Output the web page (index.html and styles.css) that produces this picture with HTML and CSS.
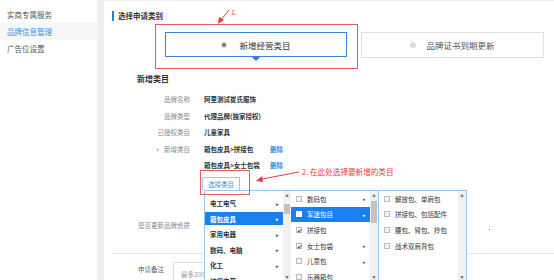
FILE: index.html
```html
<!DOCTYPE html>
<html>
	<head>
		<meta charset="UTF-8">
		<title>品牌信息管理</title>
		<link rel="stylesheet" href="styles.css">
	</head>
	<body>
		<div class="page">
			<aside class="sidebar">
				<div class="nav-item">实商专属服务</div>
				<div class="nav-item active">品牌信息管理</div>
				<div class="nav-item">广告位设置</div>
			</aside>
			<div class="gutter"></div>
			<main class="main">
				<h3 class="section-title">选择申请类别</h3>
				<div class="type-row">
					<div class="type-box on"><span class="radio"></span>新增经营类目</div>
					<div class="type-box"><span class="radio"></span>品牌证书到期更新</div>
				</div>
				<h4 class="sub-title">新增类目</h4>
				<div class="form">
					<div class="row"><label>品牌名称</label><span class="val">阿里测试崔氏服饰</span></div>
					<div class="row"><label>品牌类型</label><span class="val">代理品牌(独家授权)</span></div>
					<div class="row"><label>已授权类目</label><span class="val">儿童家具</span></div>
					<div class="row"><label><i>•</i>新增类目</label><span class="val">箱包皮具&gt;拼接包</span><a class="del">删除</a></div>
					<div class="row"><label></label><span class="val">箱包皮具&gt;女士包袋</span><a class="del">删除</a></div>
					<div class="row btn-row"><label></label><span class="pick-btn">选择类目</span></div>
					<div class="row tall"><label>是否更新品牌资质</label></div>
				</div>
				<div class="remark">
					<label>申请备注</label>
					<div class="input">最多200字</div>
				</div>
			</main>
		</div>

		<!-- 类目下拉 -->
		<div class="dropdown">
			<div class="col col1">
				<ul class="list">
					<li>电工电气<span class="arr">▸</span></li>
					<li class="sel">箱包皮具<span class="arr">▸</span></li>
					<li>家用电器<span class="arr">▸</span></li>
					<li>数码、电脑<span class="arr">▸</span></li>
					<li>化工<span class="arr">▸</span></li>
					<li>纺织皮革<span class="arr">▸</span></li>
				</ul>
				<div class="scroll"><span class="up">▲</span><span class="thumb t1"></span><span class="down">▼</span></div>
			</div>
			<div class="col col2">
				<ul class="list">
					<li><span class="cb"></span>数码包<span class="arr">▸</span></li>
					<li class="sel"><span class="cb"></span>军迷包目<span class="arr">▸</span></li>
					<li><span class="cb checked"></span>拼接包</li>
					<li><span class="cb checked"></span>女士包袋<span class="arr">▸</span></li>
					<li><span class="cb"></span>儿童包<span class="arr">▸</span></li>
					<li><span class="cb"></span>乐器箱包</li>
				</ul>
				<div class="scroll"><span class="up">▲</span><span class="thumb t2"></span><span class="down">▼</span></div>
			</div>
			<div class="col col3">
				<ul class="list">
					<li><span class="cb"></span>解放包、单肩包</li>
					<li><span class="cb"></span>拼接包、包括配件</li>
					<li><span class="cb"></span>腰包、臂包、拎包</li>
					<li><span class="cb"></span>战术双肩背包</li>
				</ul>
				<div class="scroll"><span class="up">▲</span><span class="down">▼</span></div>
			</div>
		</div>

		<!-- 标注 -->
		<div class="mark-box box1"></div>
		<div class="mark-box box2"></div>
		<div class="mark-text text1">1.</div>
		<div class="mark-text text2">2. 在此处选择要新增的类目</div>
		<span class="dot"></span>
		<svg class="marks" width="554" height="280" viewBox="0 0 554 280">
			<line x1="229" y1="10" x2="221" y2="20" stroke="#e53a3a" stroke-width="1"/>
			<polygon points="218,24 219,17 224,20" fill="#e53a3a"/>
			<line x1="299" y1="172" x2="262" y2="179" stroke="#e53a3a" stroke-width="1"/>
			<polygon points="256,181 262,176 263,182" fill="#e53a3a"/>
		</svg>
	</body>
</html>
```

FILE: styles.css
```css
*{margin: 0;padding: 0;box-sizing: border-box;}
body{
	font-family: "Noto Sans CJK SC", "Noto Sans", sans-serif;
	color: #333;
	background: #fff;
	width: 554px;
	height: 280px;
	overflow: hidden;
}
ul{list-style: none;}
.page{
	display: flex;
	height: 280px;
}
.sidebar{
	width: 97px;
	padding-top: 6px;
}
.nav-item{
	height: 17px;
	line-height: 17px;
	padding-left: 7px;
	font-size: 7.5px;
	color: #555;
}
.nav-item.active{
	background: #f7f7f7;
	color: #3d8fe3;
}
.gutter{
	width: 7px;
	background: #f0efeb;
}
.main{
	flex: 1;
	border-top: 1px solid #efefef;
	padding-left: 8px;
}
.section-title{
	margin-top: 10px;
	height: 10px;
	line-height: 10px;
	font-size: 7.5px;
	font-weight: 700;
	color: #333;
	border-left: 2px solid #2b7de4;
	padding-left: 4px;
}
.type-row{
	display: flex;
	gap: 14px;
	margin-top: 11px;
	margin-left: 53px;
}
.type-box{
	position: relative;
	width: 183px;
	height: 26px;
	border: 1px solid #e0e0e0;
	display: flex;
	align-items: center;
	justify-content: center;
	font-size: 8.5px;
	color: #555;
}
.type-box.on{
	width: 182px;
	height: 25px;
	border: 1.5px solid #3b7fe0;
	color: #333;
}
.type-box.on::after{
	content: "";
	position: absolute;
	left: 86px;
	bottom: -5px;
	border-left: 4px solid transparent;
	border-right: 4px solid transparent;
	border-top: 4px solid #2b7de4;
}
.radio{
	width: 6px;
	height: 6px;
	border-radius: 50%;
	background: #ddd;
	margin-right: 11px;
}
.type-box.on .radio{
	background: #777;
	border: 1.5px solid #ddd;
	margin-right: 12px;
}
.type-box:not(.on) .radio{
	margin-right: 10px;
}
.sub-title{
	margin-top: 16px;
	height: 10px;
	line-height: 10px;
	font-size: 8px;
	font-weight: 700;
	padding-left: 25px;
	color: #333;
}
.form{
	margin-top: 7px;
}
.row{
	display: flex;
	align-items: center;
	height: 16.5px;
	font-size: 6.5px;
}
.row label{
	width: 78px;
	text-align: right;
	color: #888;
}
.row label i{
	font-style: normal;
	color: #d9343a;
	margin-right: 3px;
}
.val{
	margin-left: 14px;
	min-width: 66px;
	color: #333;
	font-weight: 700;
}
.del{
	color: #3a8ee6;
	font-weight: 700;
}
.btn-row{
	height: 16px;
	align-items: flex-end;
}
.pick-btn{
	margin-left: 12px;
	width: 38px;
	height: 13px;
	line-height: 12px;
	text-align: center;
	border: 1px solid #9cc6ea;
	border-bottom: none;
	color: #3a8ee6;
	font-size: 6.5px;
}
.row.tall{
	height: 64px;
	align-items: flex-start;
	padding-top: 30px;
	border-bottom: 1px solid #e8e8e8;
}
.remark{
	display: flex;
	align-items: flex-start;
	padding-left: 26px;
	padding-top: 8px;
	font-size: 6.5px;
}
.remark label{
	width: 35px;
	color: #666;
	line-height: 10px;
	margin-top: 2px;
}
.input{
	width: 120px;
	height: 24px;
	border: 1px solid #ddd;
	padding: 6px 7px;
	color: #999;
}

/* 下拉 */
.dropdown{
	position: absolute;
	left: 204px;
	top: 190px;
	height: 92px;
	display: flex;
	background: #fff;
	border-top: 1px solid #9cc6ea;
	border-left: 1px solid #9cc6ea;
	font-size: 6.5px;
}
.col{
	display: flex;
	height: 100%;
}
.list li{
	position: relative;
	display: flex;
	align-items: center;
	height: 15.6px;
	color: #333;
}
.col1 .list{
	width: 78px;
	padding-top: 5.5px;
}
.col1 .list li{
	height: 13px;
	margin-bottom: 2.6px;
	padding-left: 5px;
	font-weight: 700;
}
.col2 .list{
	width: 79px;
}
.col3{
	border-left: 1px solid #9cc6ea;
	border-right: 1px solid #9cc6ea;
}
.col3 .list{
	width: 79px;
}
.col2 .list li,.col3 .list li{
	padding-left: 5px;
}
.list li.sel{
	background: #1a7ff0;
	color: #fff;
}
.arr{
	position: absolute;
	right: 4px;
	font-size: 5px;
	color: #555;
}
.sel .arr{color: #fff;}
.cb{
	width: 6px;
	height: 6px;
	border: 1px solid #bbb;
	background: #f4f4f4;
	margin-right: 5px;
	font-size: 6px;
	line-height: 5px;
	text-align: center;
	color: #333;
}
.sel .cb{
	background: #fff;
	border-color: #fff;
}
.cb.checked::after{
	content: "✔";
}
.scroll{
	position: relative;
	width: 8px;
	height: 100%;
	background: #f1f1f1;
}
.up,.down{
	position: absolute;
	left: 0;
	width: 8px;
	text-align: center;
	font-size: 3.5px;
	color: #666;
}
.up{top: 2px;}
.down{top: 84px;}
.thumb{
	position: absolute;
	left: 1px;
	width: 6px;
	background: #c3c3c3;
}
.t1{top: 13px;height: 10px;}
.t2{top: 10px;height: 22px;}

/* 标注 */
.mark-box{
	position: absolute;
	border: 1px solid #e35b63;
}
.box1{
	left: 155px;
	top: 24px;
	width: 203px;
	height: 45px;
}
.box2{
	left: 200px;
	top: 170px;
	width: 50px;
	height: 25px;
}
.mark-text{
	position: absolute;
	color: #e53a3a;
	line-height: 12px;
}
.text1{
	left: 231px;
	top: 6px;
	font-size: 7px;
}
.text2{
	left: 302px;
	top: 166px;
	font-size: 7.6px;
}
.dot{
	position: absolute;
	left: 489px;
	top: 229px;
	width: 1px;
	height: 1px;
	background: #e05a6a;
}
.marks{
	position: absolute;
	left: 0;
	top: 0;
	pointer-events: none;
}
```
